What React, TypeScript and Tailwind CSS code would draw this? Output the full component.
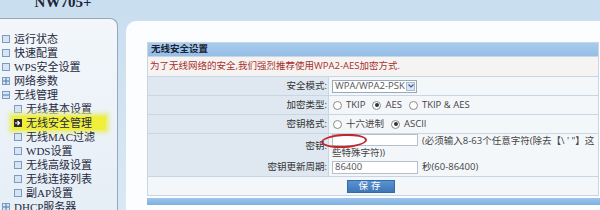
import React from 'react'

type Icon = 'box' | 'plus' | 'minus' | 'arrow'

const MENU: { text: string; icon: Icon; sub?: boolean; active?: boolean }[] = [
  { text: '运行状态', icon: 'box' },
  { text: '快速配置', icon: 'box' },
  { text: 'WPS安全设置', icon: 'box' },
  { text: '网络参数', icon: 'plus' },
  { text: '无线管理', icon: 'minus' },
  { text: '无线基本设置', icon: 'box', sub: true },
  { text: '无线安全管理', icon: 'arrow', sub: true, active: true },
  { text: '无线MAC过滤', icon: 'box', sub: true },
  { text: 'WDS设置', icon: 'box', sub: true },
  { text: '无线高级设置', icon: 'box', sub: true },
  { text: '无线连接列表', icon: 'box', sub: true },
  { text: '副AP设置', icon: 'box', sub: true },
  { text: 'DHCP服务器', icon: 'plus' },
]

function MenuIcon({ icon }: { icon: Icon }) {
  if (icon === 'arrow') {
    return (
      <span className="w-[8px] h-[8px] bg-[#2c2c2c] flex items-center justify-center shrink-0">
        <svg width="6" height="6" viewBox="0 0 6 6">
          <path d="M0 3h4M2.5 1l2 2-2 2" stroke="#fff" strokeWidth="1.2" fill="none" />
        </svg>
      </span>
    )
  }
  return (
    <span className="w-[8px] h-[8px] border border-[#7b9cc0] bg-[#d6e5f3] flex items-center justify-center shrink-0">
      {icon === 'plus' && (
        <svg width="6" height="6" viewBox="0 0 6 6">
          <path d="M0 3h6M3 0v6" stroke="#4f78a8" strokeWidth="1" />
        </svg>
      )}
      {icon === 'minus' && (
        <svg width="6" height="6" viewBox="0 0 6 6">
          <path d="M0 3h6" stroke="#4f78a8" strokeWidth="1" />
        </svg>
      )}
    </span>
  )
}

function Radio({ checked }: { checked?: boolean }) {
  return (
    <span className="w-[9px] h-[9px] rounded-full border border-[#8a8a8a] bg-white flex items-center justify-center shrink-0">
      {checked && <span className="w-[4px] h-[4px] rounded-full bg-[#333]" />}
    </span>
  )
}

function Row({ label, children, h = 'h-[19px]' }: { label: string; children: React.ReactNode; h?: string }) {
  return (
    <div className={`grid grid-cols-[181px_1fr] border-t border-[#c8d5e2] ${h}`}>
      <div className="bg-[#dfe8f1] border-r border-[#c8d5e2] flex items-center justify-end pr-[1px] text-[#333]">
        {label}
      </div>
      <div className="bg-[#f4f7fa] flex items-center pl-[3px] text-[#444]">{children}</div>
    </div>
  )
}

export default function App() {
  return (
    <div
      className="relative w-[600px] h-[210px] overflow-hidden bg-gradient-to-b from-[#c9def0] to-[#d9e8f4] flex items-start"
      style={{ fontFamily: '"Open Sans", "Noto Sans CJK SC", sans-serif' }}
    >
      {/* left column */}
      <div className="w-[118px] shrink-0 flex flex-col">
        <div className="h-[18px] flex justify-center">
          <span
            className="text-[15px] font-bold text-[#1c2535] leading-none -mt-[5px] ml-[8px]"
            style={{ fontFamily: '"Liberation Serif", serif' }}
          >
            NW705+
          </span>
        </div>
        <div
          className="h-[192px] rounded-tr-[8px] border-t border-r border-[#95a8bc] bg-gradient-to-b from-[#f3f7fb] to-[#e6eef6] pt-[13px] text-[11px] text-[#1f2a40]"
          style={{ fontFamily: '"Liberation Serif", "Noto Sans CJK SC", serif' }}
        >
          {MENU.map(m => (
            <div key={m.text} className={`h-[14px] flex items-center ${m.sub ? 'pl-[14px]' : 'pl-[2px]'}`}>
              <div
                className={`flex items-center gap-[4px] h-[14px] pr-[6px] ${
                  m.active ? 'bg-[#f0f03c] shadow-[0_0_4px_3px_#e8ee80] -ml-[2px] pl-[2px] w-[94px]' : ''
                }`}
              >
                <MenuIcon icon={m.icon} />
                <span className="leading-none whitespace-nowrap">{m.text}</span>
              </div>
            </div>
          ))}
        </div>
      </div>

      {/* main panel */}
      <div className="mt-[21px] ml-[8px] flex-1 h-[189px] rounded-tl-[10px] bg-[#fbfdff] pl-[21px] pt-[21px] text-[9.5px]">
        <div className="w-[452px] border border-[#c8d5e2]">
          <div className="h-[13px] bg-gradient-to-b from-[#a9ccee] to-[#95bde6] flex items-center pl-[3px] font-bold text-[#1a2333]">
            无线安全设置
          </div>
          <div className="h-[20px] border-t border-[#c8d5e2] bg-[#f6f4f3] flex items-center pl-[2px] text-[#a8302c]">
            为了无线网络的安全,我们强烈推荐使用WPA2-AES加密方式.
          </div>
          <Row label="安全模式:">
            <div className="w-[85px] h-[13px] border border-[#9aa7b5] bg-white flex items-center justify-between pl-[2px] pr-[1px] text-[#555]">
              <span className="leading-none whitespace-nowrap">WPA/WPA2-PSK</span>
              <span className="w-[9px] h-[9px] bg-[#dbe6f3] border border-[#a9bcd2] flex items-center justify-center shrink-0">
                <svg width="6" height="4" viewBox="0 0 6 4">
                  <path d="M0.5 0.5l2.5 2.5 2.5-2.5" stroke="#3a5f9a" strokeWidth="1.2" fill="none" />
                </svg>
              </span>
            </div>
          </Row>
          <Row label="加密类型:">
            <div className="flex items-center gap-[4px] pl-[1px] whitespace-nowrap">
              <Radio />
              <span className="mr-[3px]">TKIP</span>
              <Radio checked />
              <span className="mr-[3px]">AES</span>
              <Radio />
              <span>TKIP &amp; AES</span>
            </div>
          </Row>
          <Row label="密钥格式:">
            <div className="flex items-center gap-[4px] pl-[1px] whitespace-nowrap">
              <Radio />
              <span className="mr-[3px]">十六进制</span>
              <Radio checked />
              <span>ASCII</span>
            </div>
          </Row>
          <Row label="密钥:" h="h-[24px]">
            <div className="leading-[11px] pr-[2px]">
              <span className="inline-block align-middle w-[86px] h-[12px] border border-[#b5c0cc] bg-white mr-[4px]" />
              <span className="align-middle">(必须输入8-63个任意字符(除去【\ ' "】这些特殊字符))</span>
            </div>
          </Row>
          <Row label="密钥更新周期:">
            <div className="flex items-center gap-[4px] whitespace-nowrap">
              <span className="w-[86px] h-[13px] border border-[#b5c0cc] bg-white flex items-center pl-[2px] text-[#555]">
                86400
              </span>
              <span>秒(60-86400)</span>
            </div>
          </Row>
          <div className="h-[19px] border-t border-[#c8d5e2] bg-[#f4f7fa] flex items-center pl-[199px]">
            <span className="w-[48px] h-[13px] bg-gradient-to-b from-[#5b92d0] to-[#3f76b8] border border-[#356aa8] text-white flex items-center justify-center tracking-[3px]">
              保存
            </span>
          </div>
        </div>
        <div className="mt-[2px] w-[454px] h-[7px] bg-gradient-to-b from-[#9cc5ec] to-[#7fb0e0]" />
      </div>

      {/* hand-drawn red mark */}
      <div className="absolute left-[321px] top-[134px] w-[46px] h-[14px] rounded-[50%] border-2 border-[#c2262b] -rotate-3" />
    </div>
  )
}
